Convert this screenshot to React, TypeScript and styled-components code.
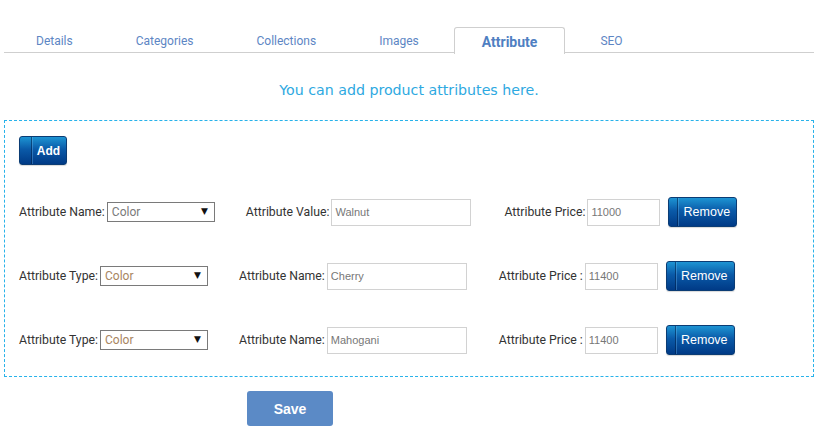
import React from "react";
import styled, { createGlobalStyle } from "styled-components";

const Global = createGlobalStyle`
  html, body { margin: 0; padding: 0; background: #fff; }
  body { font-family: Roboto, "Liberation Sans", Arial, sans-serif; }
  * { box-sizing: border-box; }
`;

const Page = styled.div`
  width: 826px;
  padding: 27px 12px 0 4px;
`;

const TabBar = styled.div`
  display: flex;
  gap: 7px;
  padding-left: 4px;
  height: 26px;
  border-bottom: 1px solid #cfcfcf;
`;

const Tab = styled.div<{ $active?: boolean }>`
  padding: 0 27px;
  display: flex;
  align-items: center;
  font-size: ${(p) => (p.$active ? "14px" : "12px")};
  color: ${(p) => (p.$active ? "#4f7fc2" : "#5d86c4")};
  font-weight: ${(p) => (p.$active ? 700 : 400)};
  border: 1px solid ${(p) => (p.$active ? "#cfcfcf" : "transparent")};
  border-bottom: none;
  border-radius: 3px 3px 0 0;
  background: ${(p) => (p.$active ? "#fff" : "transparent")};
  margin-bottom: ${(p) => (p.$active ? "-1px" : "0")};
  height: ${(p) => (p.$active ? "27px" : "26px")};
  padding-top: ${(p) => (p.$active ? "2px" : "1px")};
`;

const Info = styled.p`
  margin: 27px 0 0;
  text-align: center;
  font-family: "DejaVu Sans", Verdana, sans-serif;
  font-size: 14.2px;
  color: #2ea9e1;
  line-height: 20px;
`;

const Box = styled.div`
  margin-top: 20px;
  border: 1px dashed #28b2ea;
  height: 257px;
  padding: 15px 14px 0;
`;

const BlueButton = styled.button<{ $w: number; $h: number; $bold?: boolean; $line: number; $fs: number }>`
  position: relative;
  width: ${(p) => p.$w}px;
  height: ${(p) => p.$h}px;
  border: 1px solid #0b3c74;
  border-radius: 3px;
  background: linear-gradient(to bottom, #1d94d3 0%, #0a5aa8 45%, #003a86 100%);
  color: #fff;
  font-family: "Liberation Sans", Arial, sans-serif;
  font-size: ${(p) => p.$fs}px;
  font-weight: ${(p) => (p.$bold ? 700 : 400)};
  padding: 0 0 0 ${(p) => p.$line}px;
  cursor: pointer;
  flex: none;
  box-shadow: 0 1px 1px rgba(0, 0, 0, 0.15);
  &::before {
    content: "";
    position: absolute;
    left: ${(p) => p.$line}px;
    top: 0;
    bottom: 0;
    width: 1px;
    background: rgba(0, 30, 70, 0.55);
    box-shadow: 1px 0 0 rgba(120, 190, 240, 0.35);
  }
`;

const Rows = styled.div`
  margin-top: 32px;
  display: flex;
  flex-direction: column;
  gap: 34px;
`;

const Row = styled.div`
  display: flex;
  align-items: center;
  height: 30px;
`;

const Field = styled.div<{ $mr: number }>`
  display: flex;
  align-items: center;
  margin-right: ${(p) => p.$mr}px;
  flex: none;
`;

const Label = styled.label`
  font-size: 12.25px;
  color: #333;
  margin-right: 2px;
  white-space: nowrap;
`;

const SelectBox = styled.div<{ $tint: string }>`
  position: relative;
  width: 108px;
  height: 20px;
  border: 1px solid #7a7a7a;
  font-size: 12px;
  color: ${(p) => p.$tint};
  padding-left: 4px;
  display: flex;
  align-items: center;
  background: #fff;
`;

const Arrow = styled.span`
  position: absolute;
  right: 6px;
  top: 3px;
  font-size: 9px;
  color: #111;
  font-family: "DejaVu Sans", sans-serif;
`;

const Input = styled.input<{ $w: number }>`
  width: ${(p) => p.$w}px;
  height: 27px;
  border: 1px solid #d2d2d2;
  padding: 0 3px;
  font-family: "Liberation Sans", Arial, sans-serif;
  font-size: 11px;
  color: #777;
  outline: none;
`;

const SaveButton = styled.button`
  margin: 14px 0 0 243px;
  width: 86px;
  height: 35px;
  border: none;
  border-radius: 3px;
  background: #5b8ac6;
  color: #fff;
  font-family: "Liberation Sans", Arial, sans-serif;
  font-weight: 700;
  font-size: 14px;
  cursor: pointer;
`;

const tabs = ["Details", "Categories", "Collections", "Images", "Attribute", "SEO"];

const rows = [
  { l1: "Attribute Name:", selTint: "#7a7a7a", g1: 31, l2: "Attribute Value:", v: "Walnut", g2: 33, l3: "Attribute Price:", p: "11000" },
  { l1: "Attribute Type:", selTint: "#a8855f", g1: 31, l2: "Attribute Name:", v: "Cherry", g2: 32, l3: "Attribute Price :", p: "11400" },
  { l1: "Attribute Type:", selTint: "#a8855f", g1: 31, l2: "Attribute Name:", v: "Mahogani", g2: 32, l3: "Attribute Price :", p: "11400" },
];

export default function App() {
  return (
    <Page>
      <Global />
      <TabBar>
        {tabs.map((t) => (
          <Tab key={t} $active={t === "Attribute"}>
            {t}
          </Tab>
        ))}
      </TabBar>
      <Info>You can add product attributes here.</Info>
      <Box>
        <BlueButton $w={48} $h={29} $bold $line={11} $fs={12}>
          Add
        </BlueButton>
        <Rows>
          {rows.map((r, i) => (
            <Row key={i}>
              <Field $mr={r.g1}>
                <Label>{r.l1}</Label>
                <SelectBox $tint={r.selTint}>
                  Color
                  <Arrow>▼</Arrow>
                </SelectBox>
              </Field>
              <Field $mr={r.g2}>
                <Label>{r.l2}</Label>
                <Input $w={140} defaultValue={r.v} />
              </Field>
              <Field $mr={8}>
                <Label>{r.l3}</Label>
                <Input $w={73} defaultValue={r.p} />
              </Field>
              <BlueButton $w={69} $h={30} $line={8} $fs={12.5}>
                Remove
              </BlueButton>
            </Row>
          ))}
        </Rows>
      </Box>
      <SaveButton>Save</SaveButton>
    </Page>
  );
}
